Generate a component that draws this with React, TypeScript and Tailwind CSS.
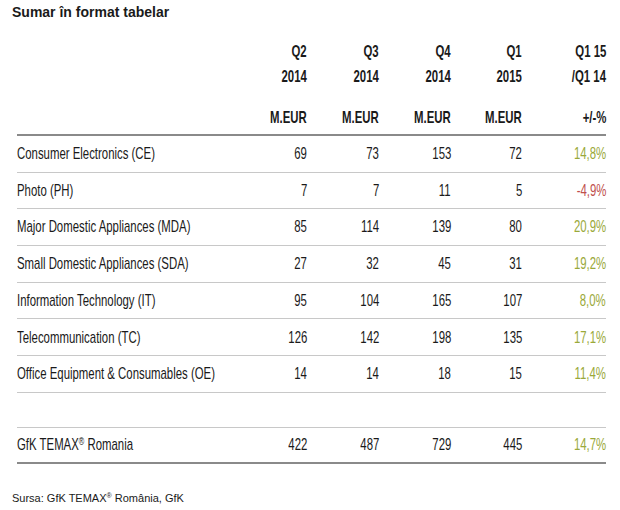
const rows = [
  { name: "Consumer Electronics (CE)", v: [69, 73, 153, 72], pct: "14,8%", up: true },
  { name: "Photo (PH)", v: [7, 7, 11, 5], pct: "-4,9%", up: false },
  { name: "Major Domestic Appliances (MDA)", v: [85, 114, 139, 80], pct: "20,9%", up: true },
  { name: "Small Domestic Appliances (SDA)", v: [27, 32, 45, 31], pct: "19,2%", up: true },
  { name: "Information Technology (IT)", v: [95, 104, 165, 107], pct: "8,0%", up: true },
  { name: "Telecommunication (TC)", v: [126, 142, 198, 135], pct: "17,1%", up: true },
  { name: "Office Equipment & Consumables (OE)", v: [14, 14, 18, 15], pct: "11,4%", up: true },
];

const cols = "grid grid-cols-[218px_72px_72px_72px_71px_84px]";

// condensed look: Liberation Sans squeezed horizontally
function N({ children, left }: { children: React.ReactNode; left?: boolean }) {
  return (
    <span className={`inline-block whitespace-nowrap scale-x-[0.67] ${left ? "origin-left" : "origin-right"}`}>
      {children}
    </span>
  );
}

function HeadCell({ a, b, c }: { a: string; b: string; c: string }) {
  return (
    <div className="text-right">
      <div><N>{a}</N></div>
      <div><N>{b}</N></div>
      <div className="mt-[16px]"><N>{c}</N></div>
    </div>
  );
}

export default function App() {
  return (
    <div className="h-[510px] w-[620px] bg-white font-['Liberation_Sans',Arial,sans-serif] text-[#1a1a1a]">
      <div className="px-3 pt-[4px] text-[14px] font-bold leading-[16px]">Sumar în format tabelar</div>

      <div className="ml-[17px] w-[589px] text-[17px]">
        {/* Header */}
        <div className={`${cols} pt-[19px] font-bold leading-[25px] border-b-[2px] border-[#8a8a8a] pb-[4px]`}>
          <div />
          <HeadCell a="Q2" b="2014" c="M.EUR" />
          <HeadCell a="Q3" b="2014" c="M.EUR" />
          <HeadCell a="Q4" b="2014" c="M.EUR" />
          <HeadCell a="Q1" b="2015" c="M.EUR" />
          <HeadCell a="Q1 15" b="/Q1 14" c="+/-%" />
        </div>

        {/* Rows */}
        {rows.map((r) => (
          <div key={r.name} className={`${cols} h-[36.7px] items-center border-b border-[#c8c8c8]`}>
            <div><N left>{r.name}</N></div>
            {r.v.map((n, i) => (
              <div key={i} className="text-right"><N>{n}</N></div>
            ))}
            <div className={`text-right ${r.up ? "text-[#9aa93a]" : "text-[#c0504d]"}`}><N>{r.pct}</N></div>
          </div>
        ))}

        <div className="h-[35px] border-b border-[#c8c8c8]" />

        {/* Total */}
        <div className={`${cols} h-[36px] items-center border-b-[2px] border-[#8a8a8a]`}>
          <div>
            <N left>
              GfK TEMAX<sup className="text-[11px]">®</sup> Romania
            </N>
          </div>
          <div className="text-right"><N>422</N></div>
          <div className="text-right"><N>487</N></div>
          <div className="text-right"><N>729</N></div>
          <div className="text-right"><N>445</N></div>
          <div className="text-right text-[#9aa93a]"><N>14,7%</N></div>
        </div>
      </div>

      <div className="mt-[27px] px-3 text-[11px] leading-[14px]">
        Sursa: GfK TEMAX<sup className="text-[7px]">®</sup> România, GfK
      </div>
    </div>
  );
}
